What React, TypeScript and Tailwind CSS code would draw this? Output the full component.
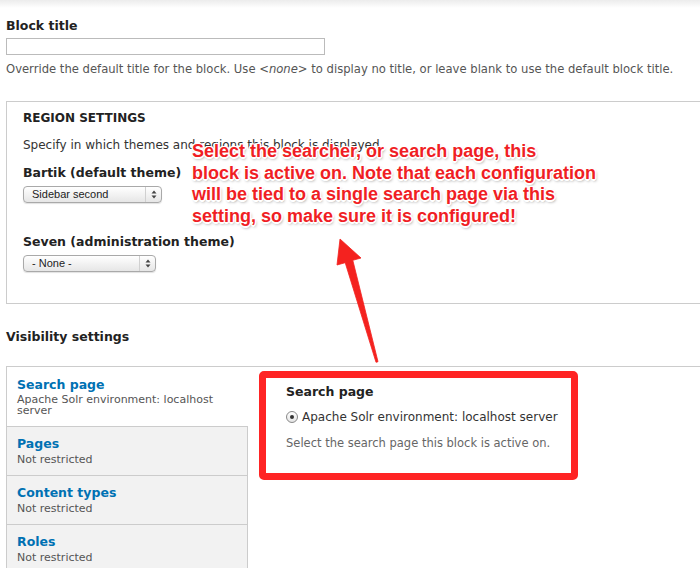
import React from "react";

interface TabType {
  title: string;
  summary: string;
  active?: boolean;
}

const tabs: TabType[] = [
  { title: "Search page", summary: "Apache Solr environment: localhost server", active: true },
  { title: "Pages", summary: "Not restricted" },
  { title: "Content types", summary: "Not restricted" },
  { title: "Roles", summary: "Not restricted" },
];

function MacSelect({ label, width }: { label: string; width: string }) {
  return (
    <div
      className={`${width} h-[17px] flex items-center rounded-[4px] border border-[#a9a9a9] bg-gradient-to-b from-white to-[#e6e6e6] shadow-[0_1px_1px_rgba(0,0,0,0.12)]`}
    >
      <span className="flex-1 pl-[8px] text-[11px] leading-none text-[#222] font-['Liberation_Sans',sans-serif]">
        {label}
      </span>
      <span className="w-[16px] h-full flex items-center justify-center border-l border-[#d0d0d0]">
        <svg width="6" height="9" viewBox="0 0 6 9">
          <path d="M3 0.5 L5.5 3.5 L0.5 3.5 Z" fill="#444" />
          <path d="M3 8.5 L5.5 5.5 L0.5 5.5 Z" fill="#444" />
        </svg>
      </span>
    </div>
  );
}

export default function App() {
  return (
    <div className="relative w-[700px] h-[568px] overflow-hidden bg-white text-[#333] font-['DejaVu_Sans',sans-serif]">
      {/* Top shade */}
      <div className="h-[8px] bg-gradient-to-b from-[#ececec] to-white" />

      {/* Block title */}
      <div className="pl-[6px] pt-[9px]">
        <label className="block text-[12.5px] font-bold text-[#222] leading-[18px]">Block title</label>
        <div className="mt-[3px] w-[319px] h-[17px] border border-[#bbb] bg-white" />
        <p className="mt-[6px] text-[11.6px] leading-[16px] text-[#555]">
          Override the default title for the block. Use <em>&lt;none&gt;</em> to display no title, or
          leave blank to use the default block title.
        </p>
      </div>

      {/* Region settings */}
      <div className="ml-[6px] mt-[24px] h-[203px] border-y border-l border-[#ccc] pl-[16px] pt-[7px]">
        <h2 className="text-[12px] font-bold uppercase text-[#222] leading-[18px]">Region settings</h2>
        <p className="mt-[9px] text-[12px] leading-[18px] text-[#333]">
          Specify in which themes and regions this block is displayed.
        </p>
        <div className="mt-[10px] text-[12.5px] font-bold text-[#222] leading-[18px]">Bartik (default theme)</div>
        <div className="mt-[4px]">
          <MacSelect label="Sidebar second" width="w-[139px]" />
        </div>
        <div className="mt-[30px] text-[12.5px] font-bold text-[#222] leading-[18px]">
          Seven (administration theme)
        </div>
        <div className="mt-[4px]">
          <MacSelect label="- None -" width="w-[133px]" />
        </div>
      </div>

      {/* Visibility settings */}
      <h2 className="pl-[6px] mt-[24px] text-[12.5px] font-bold text-[#222] leading-[18px]">Visibility settings</h2>

      <div className="ml-[6px] mt-[20px] flex border-t border-l border-[#ccc]">
        <ul className="w-[241px] shrink-0">
          {tabs.map((tab, i) => (
            <li
              key={i}
              className={
                tab.active
                  ? "h-[59px] bg-white pl-[10px] pr-[30px] pt-[10px]"
                  : "h-[49px] bg-[#f2f2f2] border-t border-r border-[#ccc] pl-[10px] pt-[9px]"
              }
            >
              <div className="text-[12.5px] font-bold text-[#0071b3] leading-[16px]">{tab.title}</div>
              <div
                className={
                  tab.active
                    ? "text-[11px] leading-[11px] text-[#555] mt-[1px]"
                    : "text-[11px] leading-[11px] text-[#555] mt-[2px]"
                }
              >
                {tab.summary}
              </div>
            </li>
          ))}
        </ul>

        {/* Pane */}
        <div className="flex-1 pl-[11px] pt-[4px]">
          <div className="w-[319px] h-[109px] rounded-[5px] border-[7px] border-[#ff2424] pl-[20px] pt-[5px]">
            <div className="text-[12.5px] font-bold text-[#222] leading-[18px]">Search page</div>
            <div className="mt-[8px] flex items-center gap-[4px] text-[12px] leading-[16px] text-[#333]">
              <span className="w-[12px] h-[12px] rounded-full border border-[#888] bg-gradient-to-b from-white to-[#e4e4e4] flex items-center justify-center">
                <span className="w-[4px] h-[4px] rounded-full bg-[#333]" />
              </span>
              Apache Solr environment: localhost server
            </div>
            <p className="mt-[10px] text-[11.5px] leading-[16px] text-[#666]">
              Select the search page this block is active on.
            </p>
          </div>
        </div>
      </div>

      {/* Annotation text */}
      <div className="absolute left-[192px] top-[141px] w-[460px] text-[18px] leading-[21.5px] font-bold text-[#f01e24] font-['Liberation_Sans',sans-serif] [text-shadow:-1.5px_0_0_#fff,1.5px_0_0_#fff,0_-1.5px_0_#fff,0_1.5px_0_#fff,-1px_-1px_0_#fff,1px_1px_0_#fff,-1px_1px_0_#fff,1px_-1px_0_#fff,1px_2px_3px_rgba(0,0,0,0.45)]">
        Select the searcher, or search page, this
        <br />
        block is active on. Note that each configuration
        <br />
        will be tied to a single search page via this
        <br />
        setting, so make sure it is configured!
      </div>

      {/* Annotation arrow */}
      <svg className="absolute left-0 top-0 pointer-events-none" width="700" height="568" viewBox="0 0 700 568">
        <polygon
          points="340,239 361,258 352.8,260.3 378,361.7 376,362.3 345.2,262.7 337,265"
          fill="#f4221f"
          stroke="#f4221f"
          strokeWidth="0.8"
          strokeLinejoin="round"
        />
      </svg>
    </div>
  );
}
